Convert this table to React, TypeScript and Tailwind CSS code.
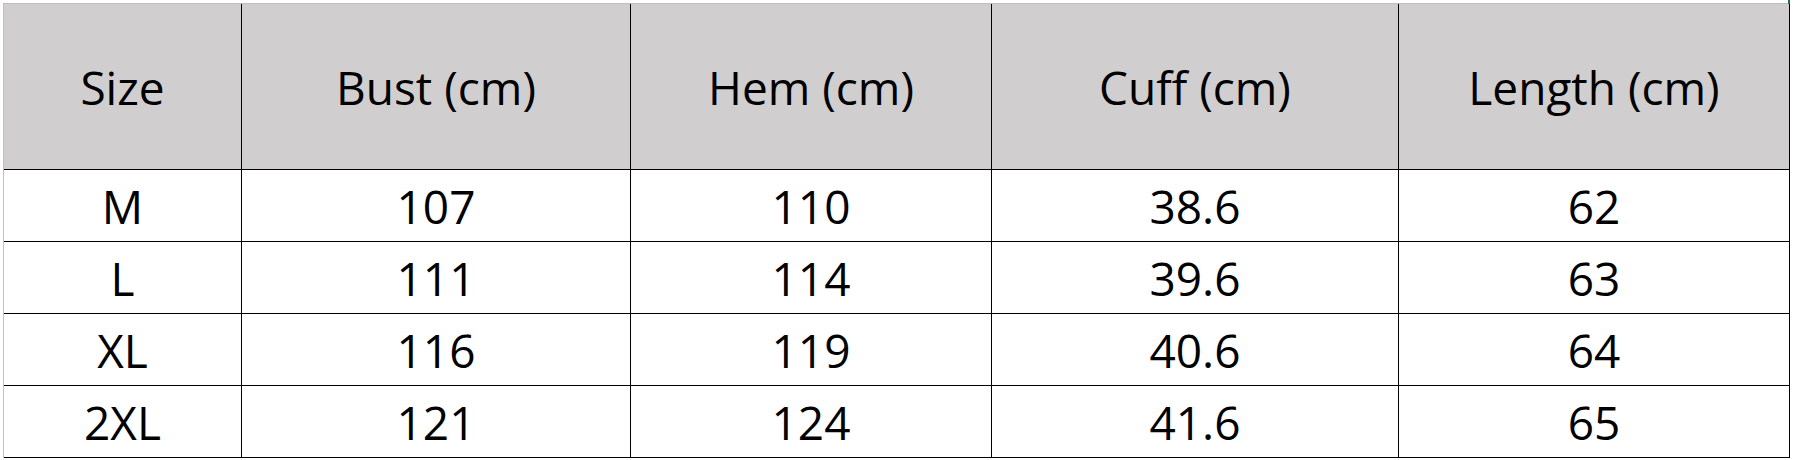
const headers = ['Size', 'Bust (cm)', 'Hem (cm)', 'Cuff (cm)', 'Length (cm)'];

const rows = [
  ['M', '107', '110', '38.6', '62'],
  ['L', '111', '114', '39.6', '63'],
  ['XL', '116', '119', '40.6', '64'],
  ['2XL', '121', '124', '41.6', '65'],
];

export default function App() {
  return (
    <div
      className="relative w-[1794px] h-[460px] bg-white pt-[3px] pl-[3px] text-black"
      style={{ fontFamily: '"Open Sans", "Liberation Sans", sans-serif' }}
    >
      <div className="absolute right-[4px] top-0 h-[4px] w-[2px] bg-[#217346]" />
      <div className="w-[1787px] border-l border-t border-[#bfbfbf] grid grid-cols-[238px_389px_361px_407px_391px]">
        {headers.map((h) => (
          <div
            key={h}
            className="h-[166px] bg-[#d0cece] border-r border-b border-black flex items-center justify-center pt-[1px] text-[46px] leading-none"
          >
            {h}
          </div>
        ))}
        {rows.map((row) =>
          row.map((cell, i) => (
            <div
              key={row[0] + i}
              className="h-[72px] border-r border-b border-black flex items-center justify-center pt-[1px] text-[46px] leading-none"
            >
              {cell}
            </div>
          ))
        )}
      </div>
    </div>
  );
}
